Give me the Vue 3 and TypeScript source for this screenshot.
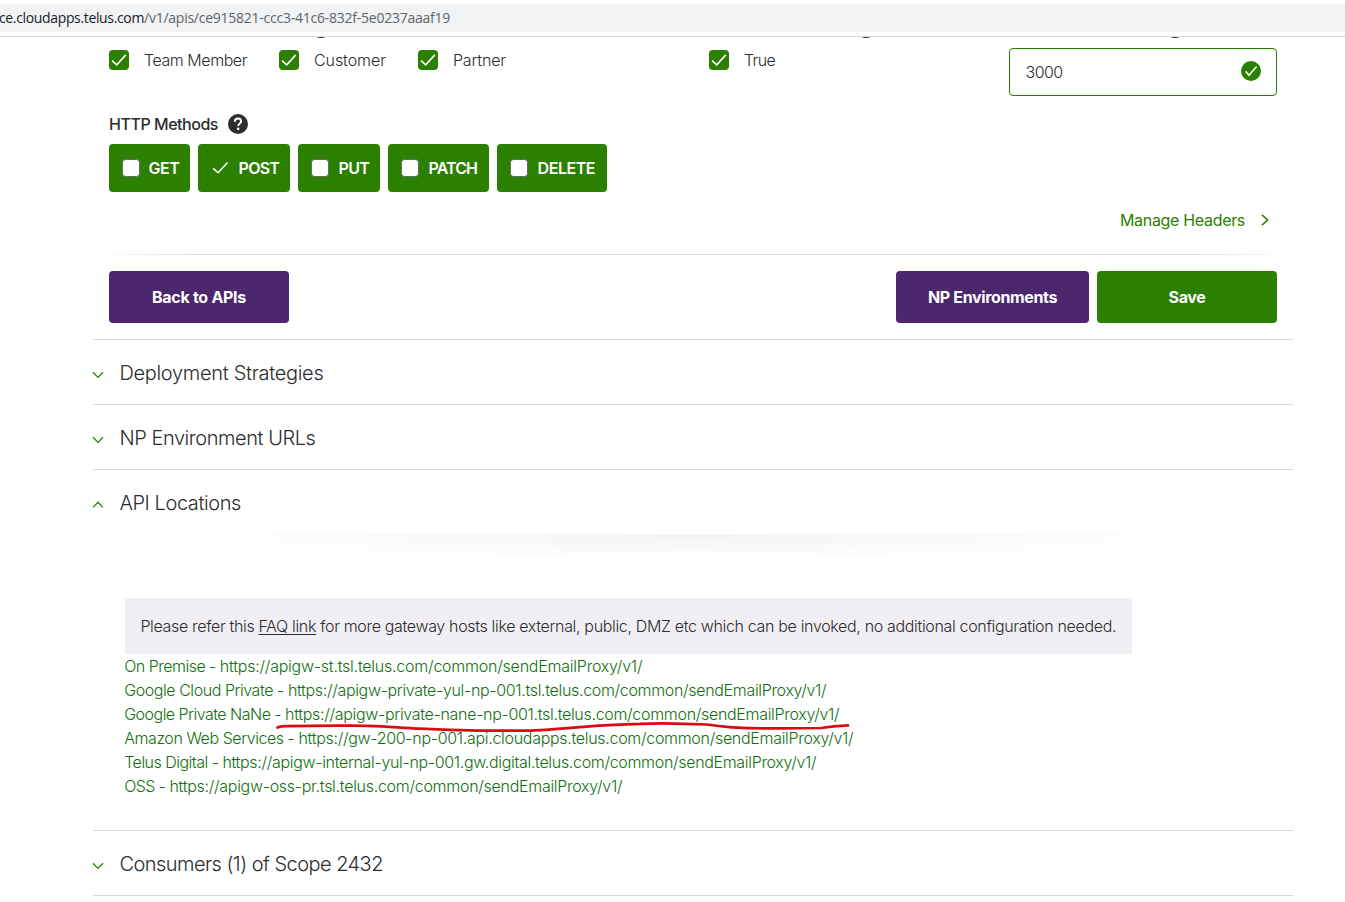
<script setup lang="ts">
interface Check { label: string; ls: number }
interface Method { name: string; on: boolean; ls: number; width: number }
interface ApiLocation { name: string; url: string; nameLs: number; urlLs: number }

const audiences: Check[] = [
  { label: 'Team Member', ls: -0.45 },
  { label: 'Customer', ls: -0.06 },
  { label: 'Partner', ls: -0.15 },
]
const methods: Method[] = [
  { name: 'GET', on: false, ls: -0.5, width: 81 },
  { name: 'POST', on: true, ls: -0.78, width: 92 },
  { name: 'PUT', on: false, ls: -0.72, width: 82 },
  { name: 'PATCH', on: false, ls: -0.92, width: 101 },
  { name: 'DELETE', on: false, ls: -0.48, width: 110 },
]
const locations: ApiLocation[] = [
  { name: 'On Premise', url: 'https://apigw-st.tsl.telus.com/common/sendEmailProxy/v1/', nameLs: -0.515, urlLs: -0.231 },
  { name: 'Google Cloud Private', url: 'https://apigw-private-yul-np-001.tsl.telus.com/common/sendEmailProxy/v1/', nameLs: -0.44, urlLs: -0.328 },
  { name: 'Google Private NaNe', url: 'https://apigw-private-nane-np-001.tsl.telus.com/common/sendEmailProxy/v1/', nameLs: -0.518, urlLs: -0.31 },
  { name: 'Amazon Web Services', url: 'https://gw-200-np-001.api.cloudapps.telus.com/common/sendEmailProxy/v1/', nameLs: -0.45, urlLs: -0.304 },
  { name: 'Telus Digital', url: 'https://apigw-internal-yul-np-001.gw.digital.telus.com/common/sendEmailProxy/v1/', nameLs: -0.51, urlLs: -0.323 },
  { name: 'OSS', url: 'https://apigw-oss-pr.tsl.telus.com/common/sendEmailProxy/v1/', nameLs: -0.56, urlLs: -0.286 },
]
const track = (ls: number) => ({ letterSpacing: `${ls}px` })
</script>

<template>
  <div class="page">
    <header class="bar">
      <div class="url"><span class="host">ce.cloudapps.telus.com</span><span class="path">/v1/apis/ce915821-ccc3-41c6-832f-5e0237aaaf19</span></div>
    </header>
    <main class="main">
      <section class="form">
        <!-- Field headings, scrolled almost entirely under the address bar -->
        <div class="heads">
          <svg class="help h1" viewBox="0 0 20 20"><circle cx="10" cy="10" r="10" /></svg>
          <svg class="help h2nd" viewBox="0 0 20 20"><circle cx="10" cy="10" r="10" /></svg>
          <svg class="help h3rd" viewBox="0 0 20 20"><circle cx="10" cy="10" r="10" /></svg>
        </div>
        <div class="fields">
          <div class="group">
            <label v-for="c in audiences" :key="c.label" class="check">
              <svg class="box" viewBox="0 0 20 20"><rect width="20" height="20" rx="4" /><path d="M3 10.6 7.7 14.8 16.8 4.9" /></svg>
              <span :style="track(c.ls)">{{ c.label }}</span>
            </label>
          </div>
          <div class="group">
            <label class="check">
              <svg class="box" viewBox="0 0 20 20"><rect width="20" height="20" rx="4" /><path d="M3 10.6 7.7 14.8 16.8 4.9" /></svg>
              <span class="true">True</span>
            </label>
          </div>
          <div class="input">
            <span class="value">3000</span>
            <svg class="box" viewBox="0 0 20 20"><circle cx="10" cy="10" r="10" /><path d="M4.6 10.4 8 14.2 15.6 5.4" /></svg>
          </div>
        </div>
        <div class="label">
          <span>HTTP Methods</span>
          <svg class="help" viewBox="0 0 20 20"><circle cx="10" cy="10" r="10" /><path d="M6.9 7.7C6.9 5.6 8.2 4.5 10 4.5s3.1 1.1 3.1 2.8c0 2.2-2.9 2.4-2.9 4.7" /><rect x="9" y="13.7" width="2.3" height="2.2" /></svg>
        </div>
        <div class="methods">
          <button v-for="m in methods" :key="m.name" class="method" :style="{ width: m.width + 'px' }">
            <svg v-if="m.on" class="tick" viewBox="0 0 18 18"><path d="M2.2 9.4 7 13.7 16.6 3.4" /></svg>
            <i v-else class="empty" />
            <span :style="track(m.ls)">{{ m.name }}</span>
          </button>
        </div>
        <a class="manage"><span>Manage Headers</span><svg viewBox="0 0 8 12"><path d="M1 .8 6.6 6 1 11.2" /></svg></a>
      </section>
      <div class="rule" />
      <div class="actions">
        <button class="btn purple back"><span>Back to APIs</span></button>
        <span class="grow" />
        <button class="btn purple wide"><span>NP Environments</span></button>
        <button class="btn green"><span>Save</span></button>
      </div>
      <section class="item">
        <h2><svg viewBox="0 0 12 8"><path d="M1 1.2 6 6.4 11 1.2" /></svg><span :style="track(-0.309)">Deployment Strategies</span></h2>
      </section>
      <section class="item">
        <h2><svg viewBox="0 0 12 8"><path d="M1 1.2 6 6.4 11 1.2" /></svg><span :style="track(-0.442)">NP Environment URLs</span></h2>
      </section>
      <section class="item">
        <h2><svg viewBox="0 0 12 8"><path d="M1 6.4 6 1.2 11 6.4" /></svg><span :style="track(-0.422)">API Locations</span></h2>
        <div class="shade" />
        <div class="panel">
          <p class="notice"><span>Please refer this <u>FAQ link</u> for more gateway hosts like external, public, DMZ etc which can be invoked, no additional configuration needed.</span></p>
          <div class="links">
            <div v-for="l in locations" :key="l.name"><span :style="track(l.nameLs)">{{ l.name + ' - ' }}</span><span :style="track(l.urlLs)">{{ l.url }}</span></div>
            <svg class="mark" viewBox="270 715 590 24"><path d="M277.5 727.6Q281 726.2 286 726.2L338 725.7Q362 725.2 382 726.3C398 727.3 408 728.2 420 728.7Q450 730.3 479 730.7H530Q545 730.3 561 728.7L599 725.6Q620 724.3 640 723.9Q662 722.9 684 723.8L707 724.5Q718 726.3 732 727.3Q755 728.6 779 728.4L821 728Q833 726.2 848 725.4" /></svg>
          </div>
        </div>
      </section>
      <section class="item last">
        <h2><svg viewBox="0 0 12 8"><path d="M1 1.2 6 6.4 11 1.2" /></svg><span :style="track(-0.542)">Consumers (1) of Scope 2432</span></h2>
      </section>
    </main>
  </div>
</template>

<style>
body { margin: 0; }
</style>

<style scoped>
.page { width: 1345px; height: 902px; overflow: hidden; background: #fff; color: #2a2c2e; font: 300 16px/24px Inter, 'Liberation Sans', sans-serif; }
span { white-space: pre; }
svg { fill: none; flex: none; display: block; }
button { border: 0; padding: 0; font: inherit; color: #fff; border-radius: 4px; display: flex; align-items: center; box-sizing: border-box; }
.bar { border-bottom: 1px solid #d9dadc; padding-top: 4px; height: 32px; }
.url { height: 28px; background: #f1f3f4; font: 400 14px/28px 'Open Sans', sans-serif; display: flex; }
.host { color: #202124; margin-left: -1px; letter-spacing: -0.352px; }
.path { color: #5f6368; letter-spacing: -0.246px; }
.main { width: 1200px; margin-left: 93px; }
.form { padding: 0 16px; height: 217px; box-sizing: border-box; }
.heads { display: grid; grid-template-columns: 600px 300px 268px; align-items: end; height: 1px; overflow: hidden; }
.h1 { margin-left: 202px; }
.h2nd { margin-left: 147px; }
.h3rd { margin-left: 156px; }
.fields { display: grid; grid-template-columns: 600px 300px 268px; height: 74px; }
.group { display: flex; padding-top: 10px; gap: 32px; align-items: flex-start; }
.check { display: flex; align-items: center; gap: 15px; height: 24px; }
.true { letter-spacing: -0.68px; }
.value { letter-spacing: -0.586px; }
.box { width: 20px; height: 20px; fill: #2b8000; }
.box path { fill: none; stroke: #fff; stroke-width: 1.6; }
.input { height: 48px; margin-top: 10px; box-sizing: border-box; border: 1px solid #2b8000; border-radius: 4px; display: flex; align-items: center; justify-content: space-between; padding: 0 15px 0 15.6px; }
.input .box { margin-bottom: 2px; }
.label { display: flex; align-items: center; gap: 10px; height: 24px; font-weight: 500; letter-spacing: -0.466px; }
.help { width: 20px; height: 20px; }
.help circle { fill: #2a2c2e; }
.help path { stroke: #fff; stroke-width: 2; }
.help rect { fill: #fff; }
.methods { display: flex; gap: 8px; padding-top: 8px; }
.method { height: 48px; background: #2b8000; font-weight: 600; padding-left: 13px; gap: 9.6px; }
.method:first-child { gap: 8.6px; }
.empty { width: 18px; height: 18px; box-sizing: border-box; border: 1px solid #5e6b60; border-radius: 3.5px; background: #fff; }
.tick { width: 18px; height: 18px; }
.tick path { stroke: #fff; stroke-width: 1.5; }
.manage { display: flex; justify-content: flex-end; align-items: center; gap: 16px; padding: 16px 8px 0 0; color: #2b8000; font-weight: 400; letter-spacing: -0.319px; }
.manage svg { width: 8px; height: 12px; stroke: #2b8000; stroke-width: 1.6; }
.rule { height: 1px; background: linear-gradient(90deg, #fff, #d8d8d8 10%, #d8d8d8 90%, #fff); }
.actions { display: flex; gap: 8px; padding: 16px; }
.grow { flex: 1; }
.btn { width: 180px; height: 52px; justify-content: center; font-weight: 700; letter-spacing: -0.332px; }
.back { letter-spacing: -0.286px; }
.wide { width: 193px; letter-spacing: -0.359px; }
.purple { background: #4b286d; }
.green { background: #2b8000; }
.item { border-top: 1px solid #d8d8d8; }
.last { border-bottom: 1px solid #d8d8d8; }
h2 { margin: 0 0 0 -0.6px; height: 64px; box-sizing: border-box; padding-top: 2px; display: flex; align-items: center; gap: 15px; font-weight: 300; font-size: 20px; line-height: 28px; }
h2 svg { width: 12px; height: 8px; margin-top: 4px; stroke: #2b8000; stroke-width: 1.3; }
.shade { height: 28px; background: radial-gradient(ellipse 47% 100% at 50% 0, #f4f4f4, #fff); }
.panel { padding: 36px 32px 32px; }
.notice { margin: 0; width: 1007px; height: 56px; line-height: 56px; background: #f2eff4; padding-left: 15.4px; box-sizing: border-box; letter-spacing: -0.336px; }
u { text-underline-offset: 2px; }
.links { position: relative; color: #0f700f; }
.links div { margin-left: -0.8px; }
.mark { position: absolute; left: 145px; top: 61px; width: 590px; height: 24px; }
.mark path { stroke: #dd0a12; stroke-width: 2.7; stroke-linecap: round; }
</style>
